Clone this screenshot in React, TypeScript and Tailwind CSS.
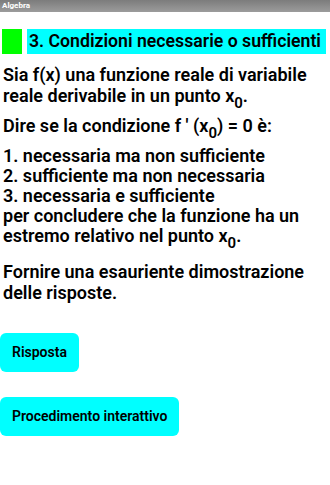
import React from "react";

const Sub = () => (
  <span className="relative text-[15px] top-[6px] leading-none">0</span>
);

export default function App() {
  return (
    <div className="w-[330px] h-[485px] bg-white overflow-hidden" style={{ fontFamily: "Roboto, 'Noto Sans', sans-serif" }}>
      <div className="h-[12px] bg-gradient-to-b from-[#7c7c7c] to-[#9c9c9c] flex items-center pl-[2px]">
        <span className="text-white text-[8px] font-bold leading-none">Algebra</span>
      </div>
      <div className="flex items-stretch mt-[17px] h-[25px] pl-[2px] pr-[4px] gap-[5px]">
        <div className="w-[20px] bg-[#00ff00]" />
        <div className="flex-1 bg-[#00ffff] flex items-center pl-[2px]">
          <span className="text-[17.7px] font-semibold text-black leading-none whitespace-nowrap">3. Condizioni necessarie o sufficienti</span>
        </div>
      </div>
      <div className="px-[3px] text-[18px] font-semibold text-black mt-[10px]">
        <div className="leading-[21px]">
          <p>Sia f(x) una funzione reale di variabile</p>
          <p>reale derivabile in un punto x<Sub />.</p>
        </div>
        <p className="leading-[21px] mt-[9px]">Dire se la condizione f ' (x<Sub />) = 0 è:</p>
        <div className="leading-[20px] mt-[10px]">
          <p>1. necessaria ma non sufficiente</p>
          <p>2. sufficiente ma non necessaria</p>
          <p>3. necessaria e sufficiente</p>
          <p>per concludere che la funzione ha un</p>
          <p>estremo relativo nel punto x<Sub />.</p>
        </div>
        <div className="leading-[21px] mt-[15px]">
          <p>Fornire una esauriente dimostrazione</p>
          <p>delle risposte.</p>
        </div>
      </div>
      <div className="flex flex-col items-start mt-[30px] gap-[25px]">
        <button className="h-[39px] px-[12px] bg-[#00ffff] rounded-[6px] text-[14px] font-semibold text-black">Risposta</button>
        <button className="h-[39px] px-[12px] bg-[#00ffff] rounded-[6px] text-[14px] font-semibold text-black">Procedimento interattivo</button>
      </div>
    </div>
  );
}
